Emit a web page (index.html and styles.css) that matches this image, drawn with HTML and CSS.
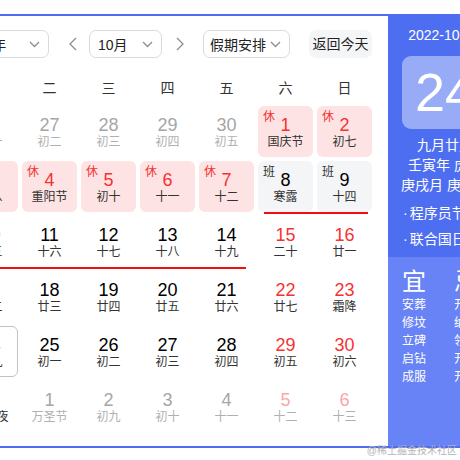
FILE: index.html
```html
<!DOCTYPE html>
<html>
<head>
<meta charset="utf-8">
<link rel="stylesheet" href="styles.css">
</head>
<body>
<div class="cal">
  <div class="main">
    <div class="controls">
      <div class="select year"><span>2022年</span><svg class="chev" width="11" height="7" viewBox="0 0 11 7"><polyline points="1,1 5.5,5.5 10,1"/></svg></div>
      <div class="arrow prev"><svg width="9" height="14" viewBox="0 0 9 14"><polyline points="8,1 2,7 8,13"/></svg></div>
      <div class="select month"><span>10月</span><svg class="chev" width="11" height="7" viewBox="0 0 11 7"><polyline points="1,1 5.5,5.5 10,1"/></svg></div>
      <div class="arrow next"><svg width="9" height="14" viewBox="0 0 9 14"><polyline points="1,1 7,7 1,13"/></svg></div>
      <div class="select holiday"><span>假期安排</span><svg class="chev" width="11" height="7" viewBox="0 0 11 7"><polyline points="1,1 5.5,5.5 10,1"/></svg></div>
      <div class="today-btn">返回今天</div>
    </div>
    <div class="weekdays">
      <div>一</div><div>二</div><div>三</div><div>四</div><div>五</div><div>六</div><div>日</div>
    </div>
    <div class="grid">
      <div class="cell other"><div class="num">26</div><div class="lunar">初一</div></div>
      <div class="cell other"><div class="num">27</div><div class="lunar">初二</div></div>
      <div class="cell other"><div class="num">28</div><div class="lunar">初三</div></div>
      <div class="cell other"><div class="num">29</div><div class="lunar">初四</div></div>
      <div class="cell other"><div class="num">30</div><div class="lunar">初五</div></div>
      <div class="cell rest"><span class="tag">休</span><div class="num">1</div><div class="lunar">国庆节</div></div>
      <div class="cell rest"><span class="tag">休</span><div class="num">2</div><div class="lunar">初七</div></div>

      <div class="cell rest"><span class="tag">休</span><div class="num">3</div><div class="lunar">初八</div></div>
      <div class="cell rest"><span class="tag">休</span><div class="num">4</div><div class="lunar">重阳节</div></div>
      <div class="cell rest"><span class="tag">休</span><div class="num">5</div><div class="lunar">初十</div></div>
      <div class="cell rest"><span class="tag">休</span><div class="num">6</div><div class="lunar">十一</div></div>
      <div class="cell rest"><span class="tag">休</span><div class="num">7</div><div class="lunar">十二</div></div>
      <div class="cell work line-start"><span class="tag">班</span><div class="num">8</div><div class="lunar">寒露</div></div>
      <div class="cell work line-end"><span class="tag">班</span><div class="num">9</div><div class="lunar">十四</div></div>

      <div class="cell line-mid"><div class="num">10</div><div class="lunar">十五</div></div>
      <div class="cell line-mid"><div class="num">11</div><div class="lunar">十六</div></div>
      <div class="cell line-mid"><div class="num">12</div><div class="lunar">十七</div></div>
      <div class="cell line-mid"><div class="num">13</div><div class="lunar">十八</div></div>
      <div class="cell line-last"><div class="num">14</div><div class="lunar">十九</div></div>
      <div class="cell weekend"><div class="num">15</div><div class="lunar">二十</div></div>
      <div class="cell weekend"><div class="num">16</div><div class="lunar">廿一</div></div>

      <div class="cell"><div class="num">17</div><div class="lunar">廿二</div></div>
      <div class="cell"><div class="num">18</div><div class="lunar">廿三</div></div>
      <div class="cell"><div class="num">19</div><div class="lunar">廿四</div></div>
      <div class="cell"><div class="num">20</div><div class="lunar">廿五</div></div>
      <div class="cell"><div class="num">21</div><div class="lunar">廿六</div></div>
      <div class="cell weekend"><div class="num">22</div><div class="lunar">廿七</div></div>
      <div class="cell weekend"><div class="num">23</div><div class="lunar">霜降</div></div>

      <div class="cell today"><div class="num">24</div><div class="lunar">廿九</div></div>
      <div class="cell"><div class="num">25</div><div class="lunar">初一</div></div>
      <div class="cell"><div class="num">26</div><div class="lunar">初二</div></div>
      <div class="cell"><div class="num">27</div><div class="lunar">初三</div></div>
      <div class="cell"><div class="num">28</div><div class="lunar">初四</div></div>
      <div class="cell weekend"><div class="num">29</div><div class="lunar">初五</div></div>
      <div class="cell weekend"><div class="num">30</div><div class="lunar">初六</div></div>

      <div class="cell"><div class="num">31</div><div class="lunar">万圣夜</div></div>
      <div class="cell other"><div class="num">1</div><div class="lunar">万圣节</div></div>
      <div class="cell other"><div class="num">2</div><div class="lunar">初九</div></div>
      <div class="cell other"><div class="num">3</div><div class="lunar">初十</div></div>
      <div class="cell other"><div class="num">4</div><div class="lunar">十一</div></div>
      <div class="cell other weekend"><div class="num">5</div><div class="lunar">十二</div></div>
      <div class="cell other weekend"><div class="num">6</div><div class="lunar">十三</div></div>
    </div>
  </div>
  <div class="panel">
    <div class="panel-top">
      <div class="date">2022-10-24</div>
      <div class="bigday">24</div>
      <div class="lunar-info">
        <div>九月廿九</div>
        <div>壬寅年 虎年</div>
        <div>庚戌月 庚戌日</div>
      </div>
      <ul class="fests">
        <li>程序员节</li>
        <li>联合国日</li>
      </ul>
    </div>
    <div class="panel-bottom">
      <div class="yiji">
        <div class="big">宜</div>
        <div>安葬</div><div>修坟</div><div>立碑</div><div>启钻</div><div>成服</div>
      </div>
      <div class="yiji">
        <div class="big">忌</div>
        <div>开市</div><div>纳财</div><div>领证</div><div>开光</div><div>开仓</div>
      </div>
    </div>
  </div>
</div>
<div class="watermark">@稀土掘金技术社区</div>
</body>
</html>
```
FILE: styles.css
```css
html, body {
  margin: 0;
  padding: 0;
  width: 460px;
  height: 460px;
  overflow: hidden;
  background: #fff;
}
body {
  position: relative;
  font-family: "Liberation Sans", "Noto Sans CJK SC", sans-serif;
  color: #333;
}
.cal {
  display: flex;
  width: max-content;
  margin-top: 14px;
  margin-left: -52px;
  border: 2px solid #4e6ef2;
}
.main {
  padding: 14px 16px 14px 13px;
  width: 409px;
}
.controls {
  display: flex;
  align-items: center;
  height: 28px;
  font-size: 14px;
  color: #222;
}
.select {
  box-sizing: border-box;
  height: 28px;
  border: 1px solid #d8dae0;
  border-radius: 7px;
  display: flex;
  align-items: center;
  justify-content: space-between;
  padding: 0 8px 0 8px;
}
.chev polyline, .arrow polyline {
  fill: none;
  stroke: #8a8d96;
  stroke-width: 1.3;
}
.year { width: 97px; margin-left: -11px; }
.month { width: 73px; }
.holiday { width: 87px; padding-left: 6px; }
.arrow {
  width: 20px;
  display: flex;
  justify-content: center;
  align-items: center;
}
.prev { margin: 0 7px 0 13px; }
.next { margin: 0 13px 0 8px; }
.today-btn {
  margin-left: 19px;
  width: 63px;
  height: 28px;
  line-height: 28px;
  text-align: center;
  background: #f4f5f7;
  border-radius: 7px;
}
.weekdays {
  display: grid;
  grid-template-columns: repeat(7, 55px);
  column-gap: 4px;
  margin-top: 14px;
  height: 32px;
  line-height: 32px;
  font-size: 14px;
  text-align: center;
  color: #333;
}
.grid {
  margin-top: 2px;
  display: grid;
  grid-template-columns: repeat(7, 55px);
  grid-auto-rows: 51px;
  gap: 4px;
}
.cell {
  position: relative;
  box-sizing: border-box;
  border-radius: 6px;
  text-align: center;
  padding-top: 9px;
}
.num {
  font-size: 18px;
  line-height: 20px;
  color: #000;
}
.lunar {
  font-size: 12px;
  line-height: 14px;
  color: #333;
}
.tag {
  position: absolute;
  left: 5px;
  top: 4px;
  font-size: 12px;
  line-height: 14px;
}
.rest { background: #fde3e3; }
.rest .num, .rest .tag { color: #f73131; }
.work { background: #f4f5f6; }
.work .tag { color: #333; }
.weekend .num { color: #f73131; }
.other .num { color: #a6a6a6; }
.other .lunar { color: #b0b0b0; }
.other.weekend .num { color: #f9a7a7; }
.today { border: 1.5px solid #c0c2c8; padding-top: 8px; }
.line-start::after, .line-end::after, .line-mid::after, .line-last::after {
  content: "";
  position: absolute;
  bottom: -2px;
  height: 2px;
  background: #f00f0f;
}
.line-start::after { left: 6px; right: -4px; }
.line-end::after { left: 0; right: 4px; }
.line-mid::after { left: 0; right: -4px; }
.line-last::after { left: 0; right: 8px; }
.panel {
  width: 114px;
  background: #4e6ef2;
  color: #fff;
  display: flex;
  flex-direction: column;
}
.panel-top {
  padding: 10px 0 5px;
}
.date {
  font-size: 14px;
  line-height: 18px;
  text-align: center;
  padding-right: 2px;
}
.bigday {
  margin: 12px 14px 0;
  height: 73px;
  border-radius: 9px;
  background: rgba(255, 255, 255, 0.42);
  font-size: 54px;
  line-height: 73px;
  text-align: center;
}
.lunar-info {
  margin-top: 6px;
  font-size: 14px;
  line-height: 20px;
  text-align: center;
  white-space: nowrap;
}
.fests {
  list-style: none;
  margin: 5px 0 0;
  padding: 0 0 0 15px;
  font-size: 14px;
  line-height: 26px;
}
.fests li::before {
  content: "·";
  margin-right: 2px;
}
.panel-bottom {
  flex: 1;
  background: #6883f5;
  display: flex;
  gap: 28px;
  padding: 11px 0 0 14px;
}
.yiji {
  font-size: 12px;
  line-height: 18px;
  width: 24px;
  white-space: nowrap;
}
.yiji .big {
  font-size: 24px;
  line-height: 28px;
}
.watermark {
  position: absolute;
  right: 3px;
  bottom: 3px;
  font-size: 10px;
  color: #b4b4b4;
  line-height: 12px;
}
```
